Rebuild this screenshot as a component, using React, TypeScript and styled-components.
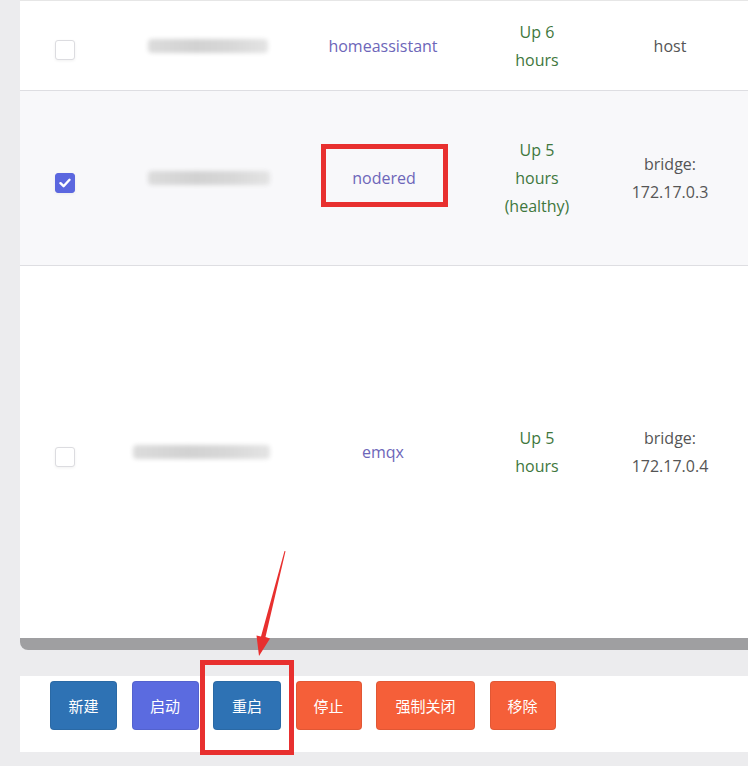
import React from 'react';
import styled, { createGlobalStyle } from 'styled-components';

const GlobalStyle = createGlobalStyle`
  html, body {
    margin: 0;
    padding: 0;
    background: #ececee;
  }
  body {
    font-family: "Open Sans", "Noto Sans", "Noto Sans CJK SC", sans-serif;
  }
`;

type Container = {
  id: string;
  blurWidth: number;
  blurOffset: number;
  image: string;
  status: string[];
  network: string[];
  height: number;
  checked?: boolean;
  highlight?: boolean;
};

const containers: Container[] = [
  { id: 'a', blurWidth: 120, blurOffset: 40, image: 'homeassistant', status: ['Up 6', 'hours'], network: ['host'], height: 90 },
  { id: 'b', blurWidth: 122, blurOffset: 40, image: 'nodered', status: ['Up 5', 'hours', '(healthy)'], network: ['bridge:', '172.17.0.3'], height: 175, checked: true, highlight: true },
  { id: 'c', blurWidth: 137, blurOffset: 25, image: 'emqx', status: ['Up 5', 'hours'], network: ['bridge:', '172.17.0.4'], height: 372 },
];

const Page = styled.div`
  position: relative;
  height: 766px;
  padding-left: 20px;
  box-sizing: border-box;
  overflow: hidden;
`;

const TablePanel = styled.div`
  background: #fff;
  border-top: 1px solid #e6e6e6;
`;

const Row = styled.div<{ $h: number; $alt?: boolean }>`
  display: grid;
  grid-template-columns: 88px 200px 150px 158px 108px 1fr;
  align-items: center;
  height: ${(p) => p.$h}px;
  box-sizing: border-box;
  background: ${(p) => (p.$alt ? '#f8f8fa' : '#fff')};
  border-bottom: 1px solid #dedee2;
  &:last-child {
    border-bottom: none;
  }
`;

const Cell = styled.div`
  display: flex;
  flex-direction: column;
  align-items: center;
  justify-content: center;
  text-align: center;
  font-size: 16px;
  line-height: 28px;
`;

const CheckBox = styled.span<{ $on?: boolean }>`
  width: 20px;
  height: 20px;
  box-sizing: border-box;
  border-radius: 3px;
  border: 1px solid ${(p) => (p.$on ? '#5b67df' : '#dcdce0')};
  background: ${(p) => (p.$on ? '#5b67df' : '#fff')};
  box-shadow: 0 1px 3px rgba(0, 0, 0, 0.06);
  display: flex;
  align-items: center;
  justify-content: center;
  margin: 9px 0 0 2px;
`;

const BlurName = styled.div<{ $w: number; $off: number }>`
  align-self: flex-start;
  margin-left: ${(p) => p.$off}px;
  width: ${(p) => p.$w}px;
  height: 14px;
  border-radius: 4px;
  background: linear-gradient(90deg, #dcdcdc, #d2d2d2 40%, #d8d8d8 70%, #e4e4e4);
  filter: blur(2px);
`;

const ImageLink = styled.span`
  color: #6d66b9;
`;

const Highlight = styled.span`
  display: flex;
  align-items: center;
  justify-content: center;
  width: 127px;
  height: 63px;
  box-sizing: border-box;
  border: 5px solid #e8302f;
  padding-top: 6px;
  margin: 0 0 6px 2px;
`;

const Status = styled.span`
  color: #3f773d;
`;

const Network = styled.span`
  color: #555;
`;

const ScrollBar = styled.div`
  height: 12px;
  background: #9f9fa1;
  border-bottom-left-radius: 8px;
`;

const Footer = styled.div`
  margin-top: 26px;
  background: #fff;
  display: flex;
  gap: 14.5px;
  padding: 5px 30px 22px;
`;

const ButtonWrap = styled.div`
  position: relative;
`;

const Button = styled.button<{ $color: string; $w: number }>`
  width: ${(p) => p.$w}px;
  height: 49px;
  border: 1px solid rgba(0, 0, 0, 0.08);
  border-radius: 4px;
  background: ${(p) => p.$color};
  color: #fff;
  font-family: "Noto Sans CJK SC", sans-serif;
  font-size: 15px;
  padding: 0;
  cursor: pointer;
`;

const ButtonMark = styled.span`
  position: absolute;
  left: -13px;
  right: -13px;
  top: -21px;
  bottom: -25px;
  border: 5px solid #e8302f;
  pointer-events: none;
`;

const Arrow = styled.svg`
  position: absolute;
  left: 240px;
  top: 545px;
  pointer-events: none;
`;

const buttons = [
  { label: '新建', color: '#2e72b4', w: 67 },
  { label: '启动', color: '#5b6be0', w: 67 },
  { label: '重启', color: '#2e72b4', w: 68, marked: true },
  { label: '停止', color: '#f55f39', w: 66 },
  { label: '强制关闭', color: '#f55f39', w: 99 },
  { label: '移除', color: '#f55f39', w: 66 },
];

export default function App() {
  return (
    <>
      <GlobalStyle />
      <Page>
        <TablePanel>
          {containers.map((c) => (
            <Row key={c.id} $h={c.height} $alt={c.checked}>
              <Cell>
                <CheckBox $on={c.checked}>
                  {c.checked && (
                    <svg width="12" height="10" viewBox="0 0 12 10">
                      <path d="M1.5 5.2 4.6 8.2 10.5 1.8" fill="none" stroke="#fff" strokeWidth="2.4" strokeLinecap="round" strokeLinejoin="round" />
                    </svg>
                  )}
                </CheckBox>
              </Cell>
              <Cell>
                <BlurName $w={c.blurWidth} $off={c.blurOffset} />
              </Cell>
              <Cell>
                {c.highlight ? (
                  <Highlight>
                    <ImageLink>{c.image}</ImageLink>
                  </Highlight>
                ) : (
                  <ImageLink>{c.image}</ImageLink>
                )}
              </Cell>
              <Cell>
                {c.status.map((s) => (
                  <Status key={s}>{s}</Status>
                ))}
              </Cell>
              <Cell>
                {c.network.map((n) => (
                  <Network key={n}>{n}</Network>
                ))}
              </Cell>
              <Cell />
            </Row>
          ))}
        </TablePanel>
        <ScrollBar />
        <Footer>
          {buttons.map((b) => (
            <ButtonWrap key={b.label}>
              <Button $color={b.color} $w={b.w}>{b.label}</Button>
              {b.marked && <ButtonMark />}
            </ButtonWrap>
          ))}
        </Footer>
        <Arrow width="60" height="120" viewBox="0 0 60 120">
          <polygon points="44.5,6 45.5,6.3 25.5,92 30,93.5 19,111 16.5,90.5 21,91.5" fill="#e8302f" />
        </Arrow>
      </Page>
    </>
  );
}
